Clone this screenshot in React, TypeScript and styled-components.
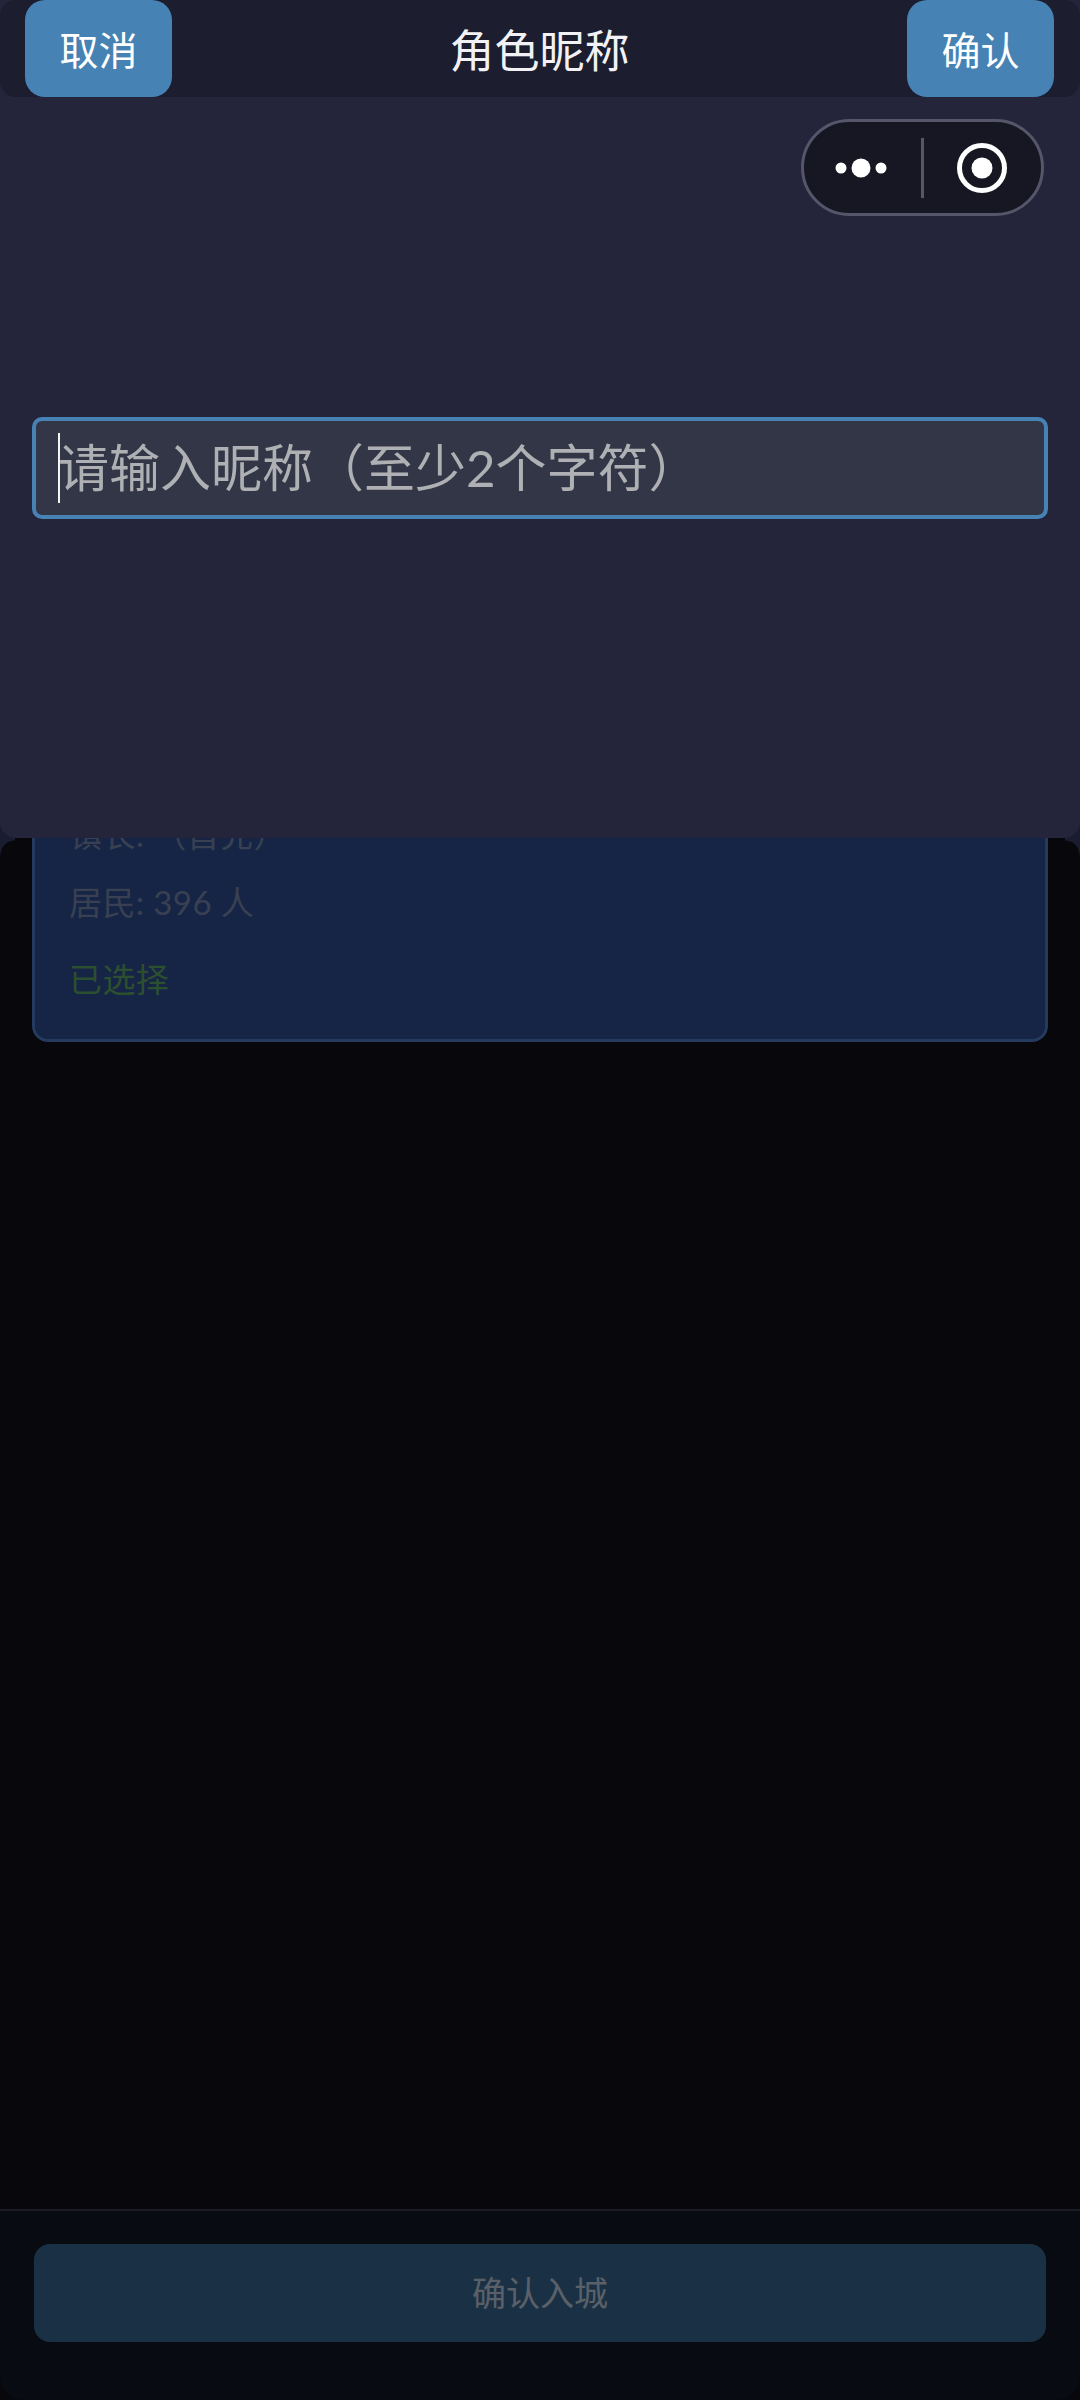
import React from "react";
import styled, { createGlobalStyle } from "styled-components";

const GlobalStyle = createGlobalStyle`
  html, body {
    margin: 0;
    padding: 0;
    background: #050507;
    font-family: "Lato", "Noto Sans CJK SC", sans-serif;
  }
  * {
    box-sizing: border-box;
  }
`;

const Screen = styled.div`
  position: relative;
  display: flex;
  flex-direction: column;
  width: 1080px;
  height: 2400px;
  overflow: hidden;
  background: #07070c;

  /* rounded shoulders of the mask just under the sheet */
  &::before,
  &::after {
    content: "";
    position: absolute;
    top: 820px;
    width: 15px;
    height: 35px;
    z-index: 1;
  }
  &::before {
    left: 0;
    background: radial-gradient(circle at 100% 100%, transparent 14px, #1a1c30 15px);
  }
  &::after {
    right: 0;
    background: radial-gradient(circle at 0 100%, transparent 14px, #1a1c30 15px);
  }
`;

/* sheet that slides over the page */
const Sheet = styled.section`
  position: absolute;
  top: 0;
  left: 0;
  right: 0;
  height: 838px;
  background: #24253a;
  border-radius: 0 0 16px 16px;
  z-index: 2;
`;

const SheetHeader = styled.header`
  display: flex;
  align-items: center;
  justify-content: space-between;
  height: 97px;
  padding: 0 26px 0 25px;
  background: #1c1d2e;
  border-radius: 16px;
`;

const HeaderButton = styled.div`
  display: flex;
  align-items: center;
  justify-content: center;
  width: 147px;
  height: 97px;
  padding-bottom: 2px;
  background: #4682b4;
  border-radius: 20px;
  color: #ffffff;
  font-size: 39px;
`;

const SheetTitle = styled.h1`
  margin: 0;
  color: #f2f2f6;
  font-size: 45px;
  font-weight: 400;
`;

const Capsule = styled.div`
  position: absolute;
  top: 119px;
  right: 36px;
  display: flex;
  align-items: center;
  width: 243px;
  height: 97px;
  background: #161722;
  border: 3px solid #55566a;
  border-radius: 49px;
`;

const CapsulePart = styled.div<{ $width: number }>`
  display: flex;
  align-items: center;
  justify-content: center;
  width: ${(p) => p.$width}px;
`;

const CapsuleDivider = styled.div`
  flex: none;
  width: 3px;
  height: 60px;
  background: #55566a;
`;

const NameField = styled.div`
  display: flex;
  align-items: center;
  height: 102px;
  margin: 320px 32px 0;
  padding-left: 22px;
  background: #323646;
  border: 4px solid #4682b4;
  border-radius: 10px;
`;

const Caret = styled.span`
  flex: none;
  width: 2px;
  height: 70px;
  background: #f4f4f4;
`;

const Placeholder = styled.span`
  margin-left: -2px;
  color: #aeb0b3;
  font-size: 51px;
  line-height: 70px;
`;

/* page behind the mask */
const PageBody = styled.main`
  flex: 1;
  padding: 777px 32px 0;
`;

const CityCard = styled.div`
  padding: 32px 34px 38px;
  background: #162545;
  border: 3px solid #243a5e;
  border-radius: 16px;
`;

const CityLine = styled.div<{ $gap?: number; $color?: string }>`
  margin-top: ${(p) => p.$gap ?? 0}px;
  color: ${(p) => p.$color ?? "#384052"};
  font-size: 33px;
  line-height: 44px;
  letter-spacing: 0.4px;
`;

const BottomBar = styled.footer`
  height: 191px;
  padding: 33px 34px 0;
  background: #090b12;
  border-top: 2px solid #1a1b26;
  border-radius: 0 0 24px 24px;
`;

const EnterButton = styled.div`
  display: flex;
  align-items: center;
  justify-content: center;
  height: 98px;
  padding-bottom: 3px;
  background: #1a3145;
  border-radius: 16px;
  color: #5a6068;
  font-size: 34px;
`;

function MoreIcon() {
  return (
    <svg width="60" height="20" viewBox="0 0 60 20" fill="#ffffff">
      <circle cx="9" cy="10" r="5.5" />
      <circle cx="29" cy="10" r="9.5" />
      <circle cx="49" cy="10" r="5.5" />
    </svg>
  );
}

function CloseIcon() {
  return (
    <svg width="50" height="50" viewBox="0 0 50 50" fill="none">
      <circle cx="25" cy="25" r="22.5" stroke="#ffffff" strokeWidth="5" />
      <circle cx="25" cy="25" r="10.5" fill="#ffffff" />
    </svg>
  );
}

function App() {
  return (
    <Screen>
      <GlobalStyle />
      <Sheet>
        <SheetHeader>
          <HeaderButton>取消</HeaderButton>
          <SheetTitle>角色昵称</SheetTitle>
          <HeaderButton>确认</HeaderButton>
        </SheetHeader>
        <Capsule>
          <CapsulePart $width={118}>
            <MoreIcon />
          </CapsulePart>
          <CapsuleDivider />
          <CapsulePart $width={119}>
            <CloseIcon />
          </CapsulePart>
        </Capsule>
        <NameField>
          <Caret />
          <Placeholder>请输入昵称（至少2个字符）</Placeholder>
        </NameField>
      </Sheet>
      <PageBody>
        <CityCard>
          <CityLine>镇长: （首充）</CityLine>
          <CityLine $gap={24}>居民: 396 人</CityLine>
          <CityLine $gap={33} $color="#2c4f30">
            已选择
          </CityLine>
        </CityCard>
      </PageBody>
      <BottomBar>
        <EnterButton>确认入城</EnterButton>
      </BottomBar>
    </Screen>
  );
}

export default App;
